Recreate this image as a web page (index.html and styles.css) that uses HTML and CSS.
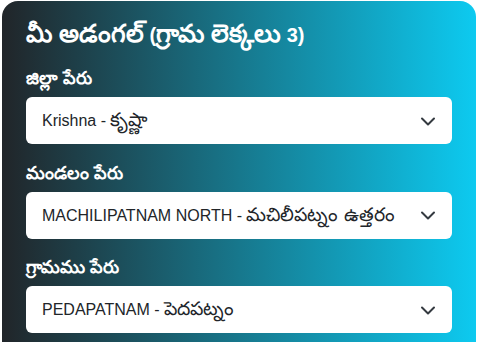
FILE: index.html
```html
<!DOCTYPE html>
<html lang="te">
<head>
<meta charset="utf-8">
<link rel="stylesheet" href="styles.css">
</head>
<body>
<div class="card">
  <h1 class="title"><span class="te">మీ అడంగల్</span> (<span class="te">గ్రామ లెక్కలు</span> 3)</h1>
  <div class="field">
    <div class="label"><span class="te">జిల్లా పేరు</span></div>
    <div class="select"><span>Krishna - <span class="te">కృష్ణా</span></span>
      <svg class="chev" viewBox="0 0 16 16" width="16" height="16"><path d="M2 5.5l6 6 6-6" fill="none" stroke="#343a40" stroke-width="2" stroke-linecap="round" stroke-linejoin="round"/></svg>
    </div>
  </div>
  <div class="field">
    <div class="label"><span class="te">మండలం పేరు</span></div>
    <div class="select"><span>MACHILIPATNAM NORTH - <span class="te">మచిలీపట్నం ఉత్తరం</span></span>
      <svg class="chev" viewBox="0 0 16 16" width="16" height="16"><path d="M2 5.5l6 6 6-6" fill="none" stroke="#343a40" stroke-width="2" stroke-linecap="round" stroke-linejoin="round"/></svg>
    </div>
  </div>
  <div class="field">
    <div class="label"><span class="te">గ్రామము పేరు</span></div>
    <div class="select"><span>PEDAPATNAM - <span class="te">పెదపట్నం</span></span>
      <svg class="chev" viewBox="0 0 16 16" width="16" height="16"><path d="M2 5.5l6 6 6-6" fill="none" stroke="#343a40" stroke-width="2" stroke-linecap="round" stroke-linejoin="round"/></svg>
    </div>
  </div>
</div>
</body>
</html>
```
FILE: styles.css
```css
html, body {
  margin: 0;
  padding: 0;
  background: #fff;
}
body {
  font-family: "Liberation Sans", Arial, sans-serif;
  overflow: hidden;
}
.card {
  margin: 1px 2px 0 2px;
  padding: 20px 24px 24px 24px;
  border-radius: 16px;
  background: linear-gradient(to right, #212529, #0dcaf0);
  color: #fff;
  height: 400px;
  box-sizing: border-box;
}
.te {
  font-size: 1.18em;
  line-height: 1;
}
.title {
  margin: 0 0 20px 0;
  font-size: 20px;
  font-weight: bold;
  line-height: 26px;
  height: 26px;
}
.title .te {
  font-size: 1.25em;
}
.field {
  margin-bottom: 17.5px;
}
.label {
  font-size: 15px;
  font-weight: bold;
  line-height: 24px;
  height: 24px;
  margin-bottom: 6px;
}
.select {
  display: flex;
  align-items: center;
  justify-content: space-between;
  height: 47px;
  box-sizing: border-box;
  padding: 0 16px;
  background: #fff;
  border-radius: 6px;
  color: #212529;
  font-size: 16px;
}
.chev {
  display: block;
  flex: none;
}
```
